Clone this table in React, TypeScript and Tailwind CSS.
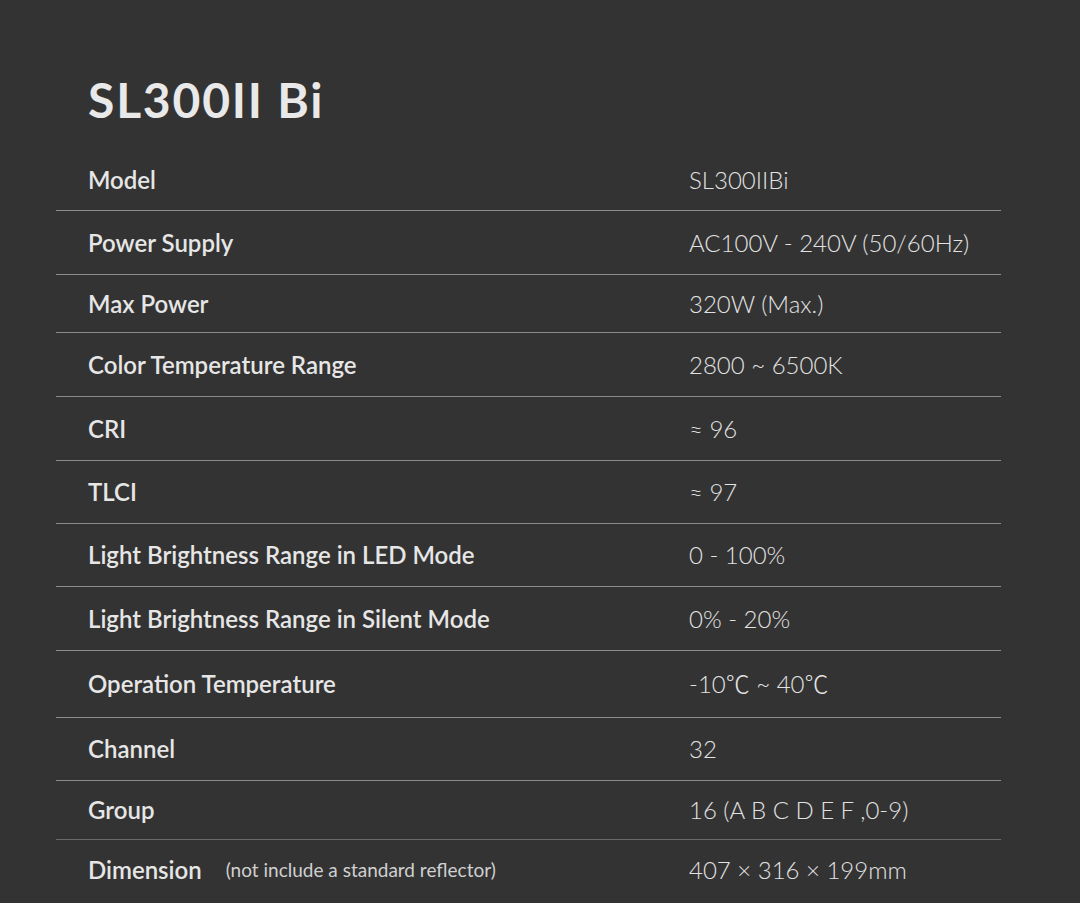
import React from "react";

interface SpecRow {
  label: string;
  value: string;
  note?: string;
  h: string;
  line?: string;
}

const rows: SpecRow[] = [
  { label: "Model", value: "SL300IIBi", h: "h-[62px]" },
  { label: "Power Supply", value: "AC100V - 240V (50/60Hz)", h: "h-[64px]" },
  { label: "Max Power", value: "320W (Max.)", h: "h-[58px]" },
  { label: "Color Temperature Range", value: "2800 ~ 6500K", h: "h-[64px]" },
  { label: "CRI", value: "≈ 96", h: "h-[64px]" },
  { label: "TLCI", value: "≈ 97", h: "h-[63px]" },
  { label: "Light Brightness Range in LED Mode", value: "0 - 100%", h: "h-[63px]" },
  { label: "Light Brightness Range in Silent Mode", value: "0% - 20%", h: "h-[64px]" },
  { label: "Operation Temperature", value: "-10℃ ~ 40℃", h: "h-[67px]" },
  { label: "Channel", value: "32", h: "h-[63px]" },
  { label: "Group", value: "16 (A B C D E F ,0-9)", h: "h-[59px]", line: "border-[#6a6a6a]" },
  { label: "Dimension", value: "407 × 316 × 199mm", note: "(not include a standard reflector)", h: "h-[60px]" },
];

export default function App() {
  return (
    <div className="min-h-[903px] w-[1080px] bg-[#333333] text-[#e8e8e8] font-['Lato','Noto_Sans_CJK_SC',sans-serif]">
      <div className="ml-[56px] w-[945px] pt-[70px]">
        <h1 className="pl-[32px] text-[48px] font-bold leading-[60px] tracking-[1.8px] text-[#e9e9e9]">SL300II Bi</h1>
        <div className="mt-[19px]">
          {rows.map((row, i) => (
            <div
              key={row.label}
              className={`flex items-center ${row.h} ${
                i < rows.length - 1 ? `border-b ${row.line ?? "border-[#8c8c8c]"}` : ""
              }`}
            >
              <div className="flex w-[633px] items-center pl-[32px]">
                <span className="text-[24px] font-semibold text-[#e6e6e6]">{row.label}</span>
                {row.note ? (
                  <span className="ml-[24px] text-[19px] text-[#d0d0d0]">{row.note}</span>
                ) : null}
              </div>
              <span className="text-[24px] font-light text-[#e2e2e2]">{row.value}</span>
            </div>
          ))}
        </div>
      </div>
    </div>
  );
}
